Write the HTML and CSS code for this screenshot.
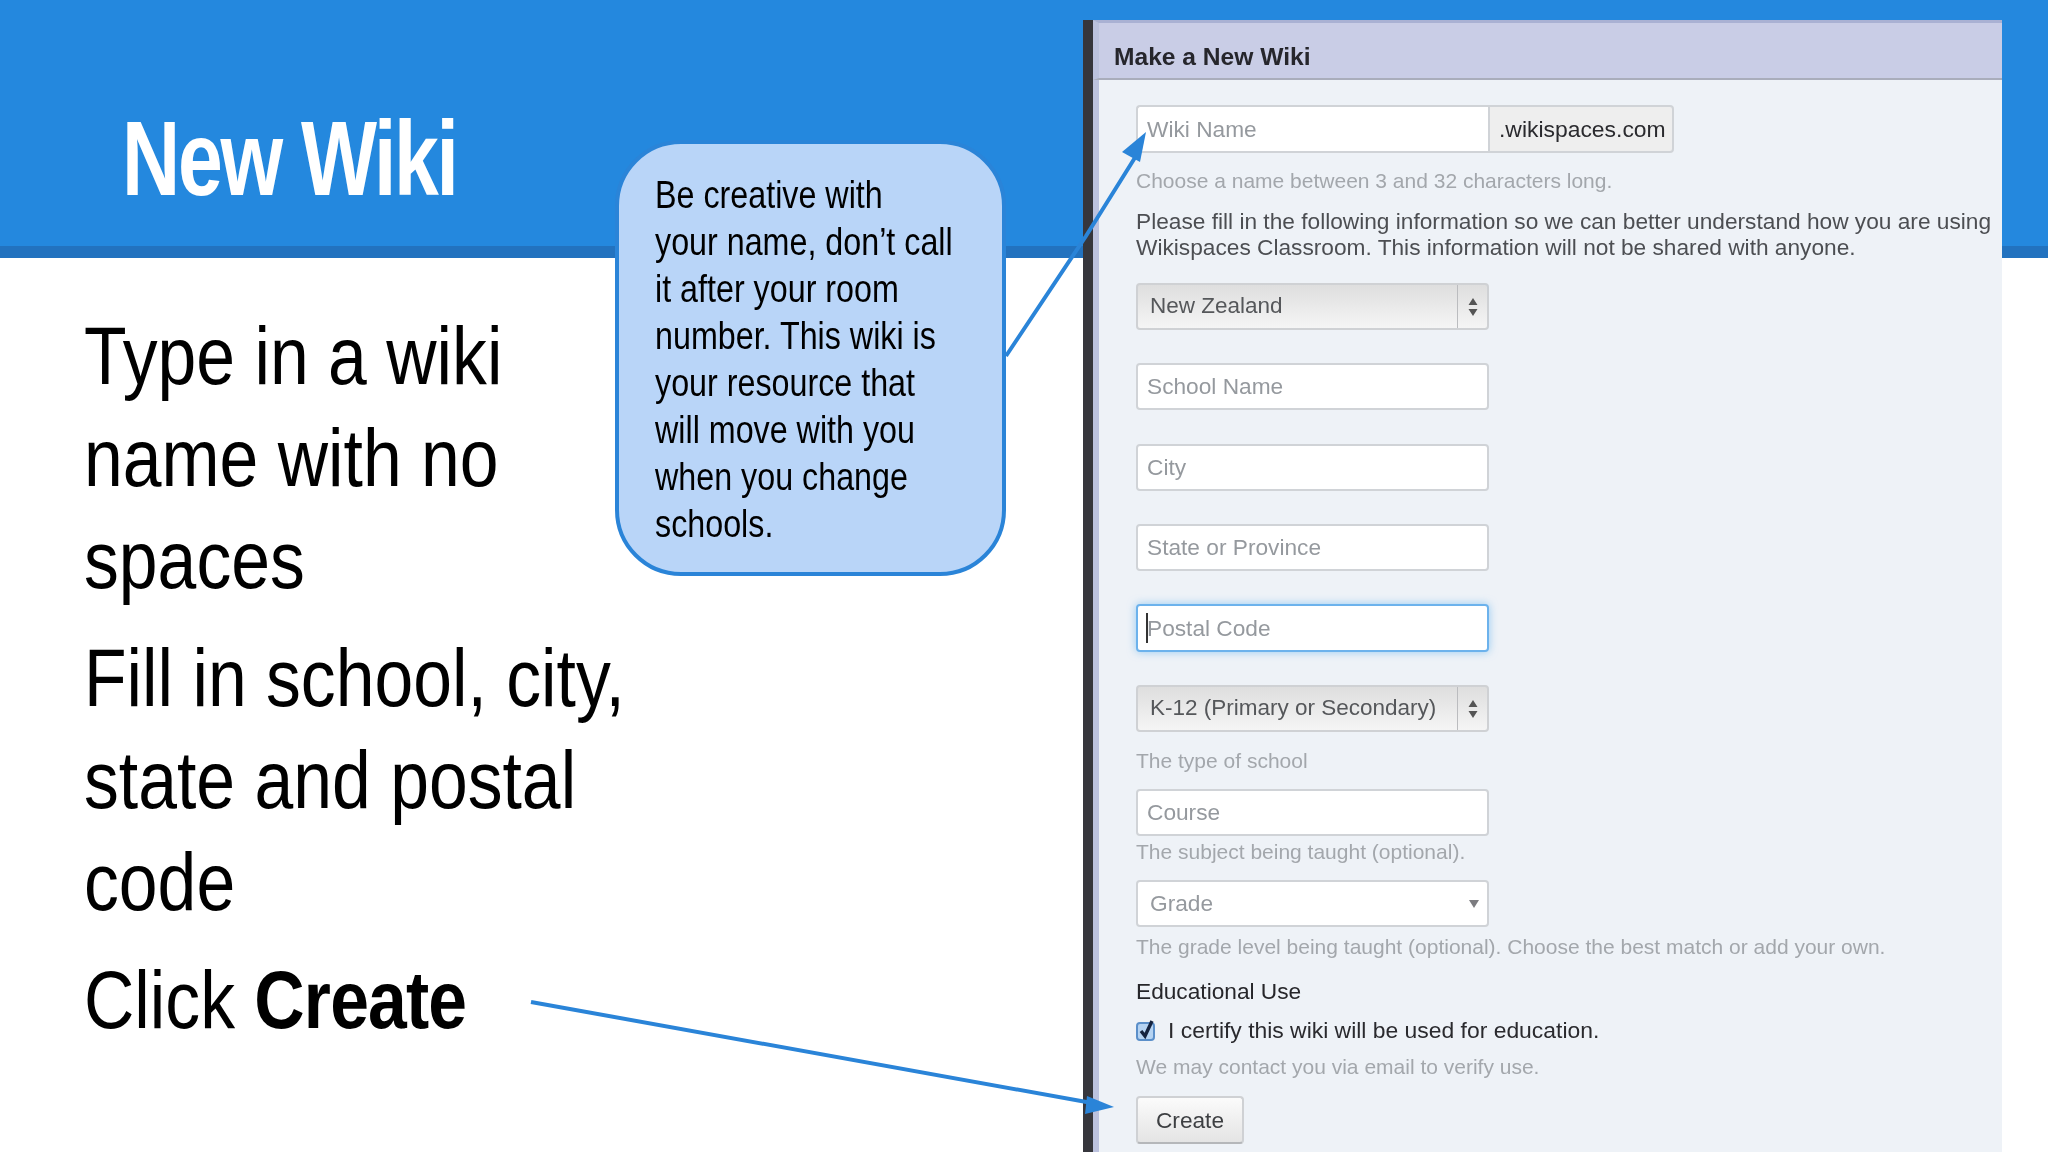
FILE: index.html
```html
<!DOCTYPE html>
<html lang="en">
<head>
<meta charset="utf-8">
<title>New Wiki</title>
<link rel="stylesheet" href="styles.css">
</head>
<body>
<main class="slide">
  <header class="band"><h1 class="title">New Wiki</h1></header>
  <section class="steps">
    <p class="step">Type in a wiki<br>name with no<br>spaces</p>
    <p class="step">Fill in school, city,<br>state and postal<br>code</p>
    <p class="step">Click <b class="strong">Create</b></p>
  </section>

  <aside class="callout"><p class="callout-text">Be creative with<br>your name, don’t call<br>it after your room<br>number. This wiki is<br>your resource that<br>will move with you<br>when you change<br>schools.</p></aside>

  <section class="panel">
    <h2 class="panel-head">Make a New Wiki</h2>
    <form class="panel-body">
      <div class="combo">
        <div class="field field-joined">Wiki Name</div>
        <div class="addon">.wikispaces.com</div>
      </div>
      <p class="hint mt15">Choose a name between 3 and 32 characters long.</p>
      <p class="intro">Please fill in the following information so we can better understand how you are using<br>Wikispaces Classroom. This information will not be shared with anyone.</p>
      <div class="select mt23"><span class="select-text">New Zealand</span><span class="stepper"><svg class="updown" viewBox="0 0 10 18"><path d="M5 0 9.5 7H.5zM5 18 .5 11h9z"/></svg></span></div>
      <div class="field mt33">School Name</div>
      <div class="field mt33">City</div>
      <div class="field mt33">State or Province</div>
      <div class="field field-focus mt33"><span class="caret"></span>Postal Code</div>
      <div class="select mt33"><span class="select-text">K-12 (Primary or Secondary)</span><span class="stepper"><svg class="updown" viewBox="0 0 10 18"><path d="M5 0 9.5 7H.5zM5 18 .5 11h9z"/></svg></span></div>
      <p class="hint mt16">The type of school</p>
      <div class="field mt15">Course</div>
      <p class="hint mt3">The subject being taught (optional).</p>
      <div class="field field-grade mt15"><span>Grade</span><svg class="down" viewBox="0 0 10 8"><path d="M0 0h10L5 8z"/></svg></div>
      <p class="hint mt7">The grade level being taught (optional). Choose the best match or add your own.</p>
      <p class="label">Educational Use</p>
      <div class="check-row">
        <svg class="check" viewBox="0 0 20 22"><rect x="1" y="4" width="17" height="17" rx="3" fill="#b5d3f2" stroke="#5b8fc9" stroke-width="2"/><path d="M5 12l4 5 7-15" fill="none" stroke="#15233f" stroke-width="3.4"/></svg>
        <span>I certify this wiki will be used for education.</span>
      </div>
      <p class="hint mt10">We may contact you via email to verify use.</p>
      <button class="create" type="button">Create</button>
    </form>
  </section>

  <svg class="arrows" viewBox="0 0 2048 1152">
    <path class="arrow-line" d="M1006 356 1086 236 1136 156"/>
    <path class="arrow-head" d="M1146 132 1122 152 1140 162z"/>
    <path class="arrow-line" d="M531 1002 1092 1103"/>
    <path class="arrow-head" d="M1114 1107 1087 1096 1085 1114z"/>
  </svg>
</main>
</body>
</html>
```
FILE: styles.css
```css
* { box-sizing: border-box; }
html, body { margin: 0; padding: 0; background: #fff; }
.slide {
  position: relative;
  width: 2048px;
  height: 1152px;
  overflow: hidden;
  background: #fff;
  font-family: "Liberation Sans", Arial, sans-serif;
  color: #000;
}
.band {
  height: 258px;
  padding: 100px 0 0 122px;
  background: #2488de;
  border-bottom: 12px solid #2272bf;
}
.title {
  display: inline-block;
  margin: 0;
  color: #fff;
  font-size: 106px;
  line-height: 116px;
  font-weight: 700;
  letter-spacing: -3px;
  white-space: nowrap;
  transform: scaleX(.76);
  transform-origin: left center;
}
.steps {
  padding: 47px 0 0 84px;
  transform: scaleX(.85);
  transform-origin: 84px 0;
}
.step {
  margin: 0 0 16px;
  font-size: 82px;
  line-height: 102px;
  white-space: nowrap;
}
.strong { font-weight: 700; letter-spacing: -1px; }
.callout {
  position: absolute;
  left: 615px;
  top: 140px;
  width: 391px;
  height: 436px;
  padding: 27px 0 0 36px;
  background: #b9d5f8;
  border: 4px solid #2a84d8;
  border-radius: 66px;
}
.callout-text {
  margin: 0;
  font-size: 38.5px;
  line-height: 47px;
  white-space: nowrap;
  transform: scaleX(.838);
  transform-origin: left center;
}
.panel {
  position: absolute;
  left: 1083px;
  top: 20px;
  width: 919px;
  height: 1132px;
  background: #eef2f7;
  border-left: 10px solid #36363c;
  box-shadow: inset 6px 0 0 #bcc2de;
  filter: blur(0.4px);
}
.panel-head {
  margin: 0;
  height: 60px;
  padding: 21px 0 0 15px;
  background: #c9cde6;
  border-top: 3px solid #a9b1d3;
  border-bottom: 2px solid #a9adbb;
  border-left: 6px solid #bcc2de;
  font-size: 24.6px;
  line-height: 26px;
  font-weight: 700;
  color: #26262c;
}
.panel-body { padding: 25px 0 0 43px; }
.field, .select, .combo, .create {
  height: 47px;
  width: 353px;
  border-radius: 4px;
  font-size: 22.7px;
}
.field {
  display: flex;
  align-items: center;
  padding-left: 9px;
  background: #fff;
  border: 2px solid #d0d3d7;
  color: #95999e;
}
.combo { display: flex; width: 538px; height: 48px; }
.field-joined {
  width: 352px;
  height: 48px;
  border-right: 0;
  border-radius: 4px 0 0 4px;
}
.addon {
  flex: 1;
  display: flex;
  align-items: center;
  padding-left: 9px;
  background: #eeeeee;
  border: 2px solid #d0d3d7;
  border-radius: 0 4px 4px 0;
  font-size: 22.9px;
  color: #2a2a2e;
}
.field-focus {
  position: relative;
  height: 48px;
  border-color: #6cb2ec;
  box-shadow: 0 0 9px rgba(100, 180, 240, .65);
}
.caret {
  position: absolute;
  left: 8px;
  top: 7px;
  width: 2px;
  height: 30px;
  background: #333;
}
.field-grade { justify-content: space-between; padding-left: 12px; padding-right: 8px; }
.down { width: 10px; height: 8px; fill: #7c7c80; }
.select {
  display: flex;
  background: linear-gradient(#dedede, #f5f5f5);
  border: 2px solid #cfd1d4;
  color: #55575a;
}
.select-text {
  flex: 1;
  padding-left: 12px;
  line-height: 41px;
  font-size: 22.5px;
}
.stepper {
  display: flex;
  width: 30px;
  align-items: center;
  justify-content: center;
  border-left: 1px solid #bbbcbf;
}
.updown { width: 10px; height: 22px; fill: #555; }
.hint {
  margin: 0;
  font-size: 21px;
  line-height: 26px;
  color: #a3a7ac;
}
.intro {
  margin: 14px 0 0;
  font-size: 22.7px;
  line-height: 26px;
  color: #4c4e52;
}
.label {
  margin: 18px 0 0;
  font-size: 22.7px;
  line-height: 26px;
  color: #26262a;
}
.check-row {
  display: flex;
  align-items: center;
  gap: 12px;
  height: 26px;
  margin-top: 13px;
  font-size: 22.9px;
  color: #2a2a2e;
}
.check { width: 20px; height: 22px; flex: none; }
.create {
  display: block;
  width: 108px;
  height: 48px;
  margin-top: 16px;
  padding: 0;
  background: linear-gradient(#fbfbfb, #e4e4e4);
  border: 2px solid #cfd1d4;
  border-bottom-color: #b5b7ba;
  color: #3d3f42;
  font-family: inherit;
}
.mt3 { margin-top: 3px; }
.mt7 { margin-top: 7px; }
.mt10 { margin-top: 11px; }
.mt15 { margin-top: 15px; }
.mt16 { margin-top: 16px; }
.mt23 { margin-top: 23px; }
.mt33 { margin-top: 33.3px; }
.arrows {
  position: absolute;
  left: 0;
  top: 0;
  width: 2048px;
  height: 1152px;
  pointer-events: none;
}
.arrow-line { fill: none; stroke: #2a84d8; stroke-width: 4px; }
.arrow-head { fill: #2a84d8; }
```
